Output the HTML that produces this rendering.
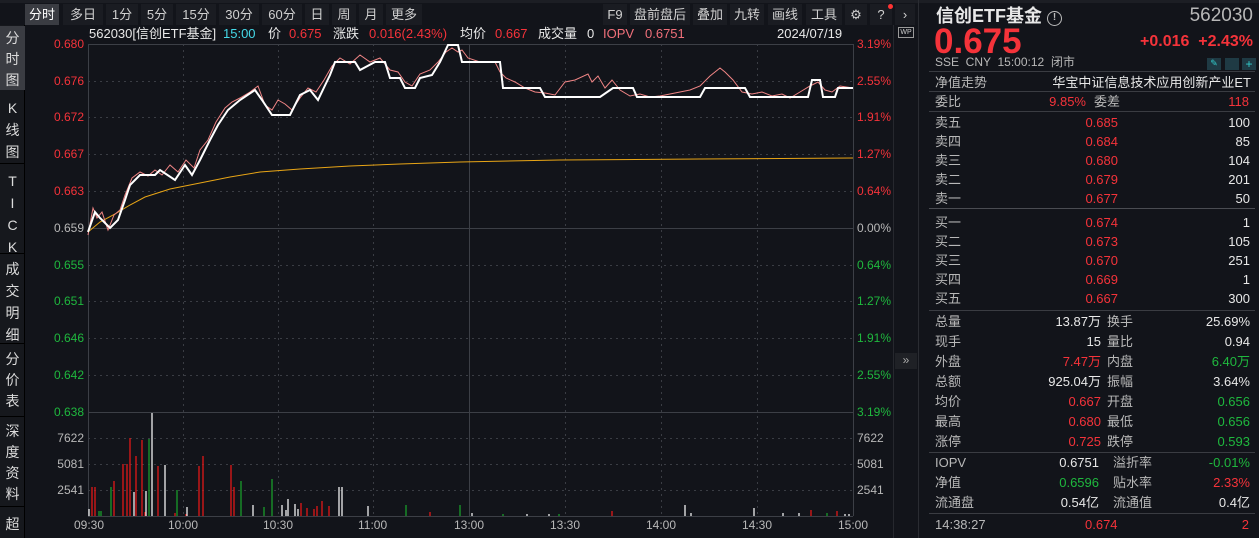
<!DOCTYPE html>
<html><head><meta charset="utf-8"><style>
*{margin:0;padding:0;box-sizing:border-box}
body{width:1259px;height:538px;background:#12141a;overflow:hidden;position:relative;font-family:"Liberation Sans","Noto Sans CJK SC",sans-serif;color:#d0d0d0;font-size:13px}
.a{position:absolute;white-space:nowrap}
.r{color:#f5333a}.g{color:#1fb83e}.w{color:#e8e8e8}.gy{color:#b8b8b8}.c{color:#45d9e8}
.tab{position:absolute;top:4px;height:21px;line-height:21px;font-size:13px;color:#d0d0d0;text-align:center;background:#1a1c22}
.lt{position:absolute;left:0;width:25px;text-align:center;font-size:14px;line-height:22px;color:#dcdcdc}
.rp{position:absolute;font-size:13px;line-height:19px}
.h{position:absolute;top:0}
</style></head><body>
<div class="a" style="left:0;top:0;width:1259px;height:3px;background:#1c1e24"></div>
<div class="tab" style="left:25px;width:34px;background:#3a3c42;color:#fff">分时</div>
<div class="tab" style="left:63px;width:40px">多日</div>
<div class="tab" style="left:106px;width:32px">1分</div>
<div class="tab" style="left:141px;width:32px">5分</div>
<div class="tab" style="left:176px;width:40px">15分</div>
<div class="tab" style="left:219px;width:40px">30分</div>
<div class="tab" style="left:262px;width:40px">60分</div>
<div class="tab" style="left:305px;width:24px">日</div>
<div class="tab" style="left:332px;width:24px">周</div>
<div class="tab" style="left:359px;width:24px">月</div>
<div class="tab" style="left:386px;width:36px">更多</div>
<div class="tab" style="left:603px;width:24px">F9</div>
<div class="tab" style="left:630px;width:60px">盘前盘后</div>
<div class="tab" style="left:693px;width:34px">叠加</div>
<div class="tab" style="left:730px;width:34px">九转</div>
<div class="tab" style="left:768px;width:34px">画线</div>
<div class="tab" style="left:806px;width:36px">工具</div>
<div class="tab" style="left:845px;width:22px">⚙</div>
<div class="tab" style="left:870px;width:22px">?</div>
<div class="a" style="left:888px;top:4px;width:5px;height:5px;border-radius:3px;background:#f33"></div>
<div class="tab" style="left:895px;width:20px">›</div>
<div class="a" style="left:0;top:25px;width:25px;height:513px;background:#16181d;border-right:1px solid #000"></div>
<div class="lt" style="top:26px;height:64px;background:#3a3c42;padding-top:2px;line-height:21px">分<br>时<br>图</div>
<div class="lt" style="top:97px;line-height:22px">K<br>线<br>图</div>
<div class="a" style="left:0;top:163px;width:25px;height:1px;background:#000"></div>
<div class="lt" style="top:170px;line-height:22px">T<br>I<br>C<br>K</div>
<div class="a" style="left:0;top:253px;width:25px;height:1px;background:#000"></div>
<div class="lt" style="top:258px;line-height:22px">成<br>交<br>明<br>细</div>
<div class="a" style="left:0;top:343px;width:25px;height:1px;background:#000"></div>
<div class="lt" style="top:349px;line-height:21px">分<br>价<br>表</div>
<div class="a" style="left:0;top:416px;width:25px;height:1px;background:#000"></div>
<div class="lt" style="top:421px;line-height:21px">深<br>度<br>资<br>料</div>
<div class="a" style="left:0;top:506px;width:25px;height:1px;background:#000"></div>
<div class="lt" style="top:513px">超</div>
<div class="a" style="left:0;top:25px;width:900px;height:18px;line-height:18px;font-size:13px">
<span class="h w" style="left:89px">562030[信创ETF基金]</span>
<span class="h c" style="left:223px">15:00</span>
<span class="h w" style="left:268px">价</span>
<span class="h r" style="left:289px">0.675</span>
<span class="h w" style="left:333px">涨跌</span>
<span class="h r" style="left:369px">0.016(2.43%)</span>
<span class="h w" style="left:460px">均价</span>
<span class="h r" style="left:495px">0.667</span>
<span class="h w" style="left:538px">成交量</span>
<span class="h w" style="left:587px">0</span>
<span class="h" style="left:603px;color:#f0707a">IOPV</span>
<span class="h" style="left:645px;color:#f0707a">0.6751</span>
<span class="h w" style="left:777px">2024/07/19</span>
</div>
<div class="a" style="left:28px;top:36px;width:56px;text-align:right;font-size:12px;line-height:16px">
<div class="r" style="position:absolute;right:0;top:0">0.680</div>
<div class="r" style="position:absolute;right:0;top:37px">0.676</div>
<div class="r" style="position:absolute;right:0;top:73px">0.672</div>
<div class="r" style="position:absolute;right:0;top:110px">0.667</div>
<div class="r" style="position:absolute;right:0;top:147px">0.663</div>
<div class="gy" style="position:absolute;right:0;top:184px">0.659</div>
<div class="g" style="position:absolute;right:0;top:221px">0.655</div>
<div class="g" style="position:absolute;right:0;top:257px">0.651</div>
<div class="g" style="position:absolute;right:0;top:294px">0.646</div>
<div class="g" style="position:absolute;right:0;top:331px">0.642</div>
<div class="g" style="position:absolute;right:0;top:368px">0.638</div>
<div class="gy" style="position:absolute;right:0;top:394px">7622</div>
<div class="gy" style="position:absolute;right:0;top:420px">5081</div>
<div class="gy" style="position:absolute;right:0;top:446px">2541</div>
</div>
<div class="a" style="left:857px;top:36px;font-size:12px;line-height:16px">
<div class="r" style="position:absolute;top:0">3.19%</div>
<div class="r" style="position:absolute;top:37px">2.55%</div>
<div class="r" style="position:absolute;top:73px">1.91%</div>
<div class="r" style="position:absolute;top:110px">1.27%</div>
<div class="r" style="position:absolute;top:147px">0.64%</div>
<div class="gy" style="position:absolute;top:184px">0.00%</div>
<div class="g" style="position:absolute;top:221px">0.64%</div>
<div class="g" style="position:absolute;top:257px">1.27%</div>
<div class="g" style="position:absolute;top:294px">1.91%</div>
<div class="g" style="position:absolute;top:331px">2.55%</div>
<div class="g" style="position:absolute;top:368px">3.19%</div>
<div class="gy" style="position:absolute;top:394px">7622</div>
<div class="gy" style="position:absolute;top:420px">5081</div>
<div class="gy" style="position:absolute;top:446px">2541</div>
</div>
<div class="a gy" style="left:0;top:517px;width:900px;height:16px;font-size:12px;line-height:16px">
<span style="position:absolute;left:74px">09:30</span><span style="position:absolute;left:168px">10:00</span><span style="position:absolute;left:263px">10:30</span><span style="position:absolute;left:358px">11:00</span><span style="position:absolute;left:454px">13:00</span><span style="position:absolute;left:550px">13:30</span><span style="position:absolute;left:646px">14:00</span><span style="position:absolute;left:742px">14:30</span><span style="position:absolute;left:838px">15:00</span></div>
<svg class="a" style="left:0;top:0" width="900" height="538">
<g stroke="#3a3d44" stroke-width="1" stroke-dasharray="2,4" fill="none">
<path d="M88 81.5H853M88 117.5H853M88 154.5H853M88 191.5H853M88 265.5H853M88 301.5H853M88 338.5H853M88 375.5H853M88 438.5H853M88 464.5H853M88 490.5H853"/>
<path d="M183.5 44V516M278.5 44V516M373.5 44V516M565.5 44V516M661.5 44V516M757.5 44V516"/>
</g>
<g stroke="#3c3f46" stroke-width="1" fill="none">
<path d="M88 44.5H853M88 228.5H853M88 412.5H853M88 516.5H853M469.5 44V516M88.5 44V516M853.5 44V516"/>
</g>
<polyline fill="none" stroke="#e8a516" stroke-width="1" points="88,232 100,222 115,214 130,205 145,197 170,189 200,183 230,177 260,172 300,169 350,166 400,164 460,162 560,160 700,159 853,158"/>
<polyline fill="none" stroke="#f08585" stroke-width="1" points="88,235 93,208 97,218 102,212 108,230 114,215 120,210 125,195 132,178 140,172 148,176 155,170 162,175 170,165 178,172 186,160 194,168 200,150 208,140 216,122 225,108 232,102 240,98 250,92 258,86 265,105 272,110 278,100 285,104 292,110 300,98 308,88 316,92 324,80 332,66 340,58 350,64 360,55 370,62 380,58 390,70 398,72 405,82 412,86 420,74 430,70 438,62 446,52 452,48 458,52 462,50 468,58 480,62 495,62 500,72 506,78 515,82 525,88 535,92 545,93 555,95 565,82 575,80 588,74 592,82 598,76 605,88 612,80 620,90 630,96 640,94 650,97 660,96 670,94 680,92 690,90 700,86 710,76 720,68 725,72 733,80 742,92 752,94 762,92 772,96 782,94 790,98 800,92 810,86 818,82 825,90 832,92 840,86 853,88"/>
<polyline fill="none" stroke="#ffffff" stroke-width="2" points="88,232 95,212 100,218 110,228 118,220 125,200 130,185 140,175 155,175 160,170 175,180 185,165 192,175 200,160 210,140 218,125 228,110 240,100 255,90 262,100 272,115 290,115 300,95 310,90 318,100 330,75 335,62 355,62 360,70 375,62 385,62 390,78 400,78 405,88 415,88 420,78 432,75 440,62 448,45 458,45 462,62 500,62 503,88 540,88 545,97 600,97 613,88 633,88 637,97 700,97 705,88 745,88 750,97 808,97 812,80 820,80 823,97 835,97 838,88 853,88"/>
<g stroke-width="1.3">
<path stroke="#e21818" d="M92 516V487M95 516V487M114 516V481M123 516V464M127 516V464M130 516V438M136 516V456M142 516V440M158 516V466M199 516V466M203 516V456M231 516V465M234 516V487M301 516V503M307 516V508M314 516V509M317 516V506M322 516V501M329 516V506M430 516V512M612 516V511M811 516V510M837 516V511M145 516V512M175 516V513M186 516V514"/>
<path stroke="#1a9c2a" d="M99 516V511M101 516V511M111 516V487M149 516V439M177 516V490M241 516V481M264 516V507M272 516V479M406 516V505M460 516V505M503 516V514M559 516V514M827 516V513"/>
<path stroke="#f0f0f0" d="M89 516V509M134 516V492M146 516V491M152 516V413M165 516V465M187 516V507M253 516V505M282 516V505M286 516V510M288 516V499M295 516V504M298 516V509M339 516V487M342 516V487M368 516V506M472 516V513M527 516V514M549 516V514M685 516V505M691 516V513M754 516V508M783 516V513M799 516V513M845 516V514M849 516V514"/>
</g>
</svg>
<div class="a" style="left:893px;top:25px;width:25px;height:513px;background:#12141a;border-left:1px solid #26282e"></div>
<div class="a" style="left:898px;top:27px;width:16px;height:11px;border:1px solid #9a9a9a;font-size:7px;line-height:9px;text-align:center;color:#ccc">WP</div>
<div class="a" style="left:895px;top:353px;width:22px;height:16px;font-size:12px;color:#aaa;text-align:center;background:#1f2126">»</div>
<div class="a" style="left:918px;top:0;width:1px;height:538px;background:#2a2c32"></div>
<div class="a w" style="left:936px;top:4px;font-size:18px;font-weight:bold;line-height:24px">信创ETF基金 <span style="display:inline-block;width:15px;height:15px;border:1.5px solid #bbb;border-radius:50%;font-size:10px;line-height:12px;text-align:center;vertical-align:2px;color:#bbb">!</span></div>
<div class="a gy" style="right:6px;top:4px;font-size:19px;line-height:24px">562030</div>
<div class="a r" style="left:934px;top:23px;font-size:35px;font-weight:bold;line-height:38px">0.675</div>
<div class="a r" style="right:6px;top:32px;font-size:16px;font-weight:bold;line-height:20px">+0.016 &nbsp;+2.43%</div>
<div class="a gy" style="left:935px;top:55px;font-size:12px;line-height:14px">SSE &nbsp;CNY &nbsp;15:00:12 &nbsp;闭市</div>
<div class="a" style="left:1207px;top:58px;width:14px;height:12px;background:#1f3a44;color:#3cc;font-size:9px;text-align:center">✎</div>
<div class="a" style="left:1225px;top:58px;width:14px;height:12px;background:#1f3a44"></div>
<div class="a" style="left:1242px;top:58px;width:14px;height:12px;background:#1f3a44;color:#3cc;font-size:12px;line-height:12px;text-align:center">+</div>
<div class="a" style="left:929px;top:71px;width:326px;height:1px;background:#3a3c42"></div>
<div class="rp gy" style="left:935px;top:73px">净值走势</div>
<div class="rp w" style="right:8px;top:73px">华宝中证信息技术应用创新产业ET</div>
<div class="a" style="left:929px;top:91px;width:326px;height:1px;background:#3a3c42"></div>
<div class="rp gy" style="left:935px;top:92px">委比</div><div class="rp r" style="left:1020px;top:92px;width:66px;text-align:right">9.85%</div><div class="rp gy" style="left:1094px;top:92px">委差</div><div class="rp r" style="right:10px;top:92px">118</div>
<div class="a" style="left:929px;top:111px;width:326px;height:1px;background:#3a3c42"></div>
<div style="position:absolute;left:935px;top:113px;width:315px;line-height:19px;font-size:13px">
<div style="display:flex"><span class="gy" style="width:80px">卖五</span><span class="r" style="width:103px;text-align:right">0.685</span><span class="w" style="flex:1;text-align:right">100</span></div>
<div style="display:flex"><span class="gy" style="width:80px">卖四</span><span class="r" style="width:103px;text-align:right">0.684</span><span class="w" style="flex:1;text-align:right">85</span></div>
<div style="display:flex"><span class="gy" style="width:80px">卖三</span><span class="r" style="width:103px;text-align:right">0.680</span><span class="w" style="flex:1;text-align:right">104</span></div>
<div style="display:flex"><span class="gy" style="width:80px">卖二</span><span class="r" style="width:103px;text-align:right">0.679</span><span class="w" style="flex:1;text-align:right">201</span></div>
<div style="display:flex"><span class="gy" style="width:80px">卖一</span><span class="r" style="width:103px;text-align:right">0.677</span><span class="w" style="flex:1;text-align:right">50</span></div>
<div style="height:5px"></div>
<div style="display:flex"><span class="gy" style="width:80px">买一</span><span class="r" style="width:103px;text-align:right">0.674</span><span class="w" style="flex:1;text-align:right">1</span></div>
<div style="display:flex"><span class="gy" style="width:80px">买二</span><span class="r" style="width:103px;text-align:right">0.673</span><span class="w" style="flex:1;text-align:right">105</span></div>
<div style="display:flex"><span class="gy" style="width:80px">买三</span><span class="r" style="width:103px;text-align:right">0.670</span><span class="w" style="flex:1;text-align:right">251</span></div>
<div style="display:flex"><span class="gy" style="width:80px">买四</span><span class="r" style="width:103px;text-align:right">0.669</span><span class="w" style="flex:1;text-align:right">1</span></div>
<div style="display:flex"><span class="gy" style="width:80px">买五</span><span class="r" style="width:103px;text-align:right">0.667</span><span class="w" style="flex:1;text-align:right">300</span></div>
</div>
<div class="a" style="left:929px;top:208px;width:326px;height:1px;background:#4a4c52"></div>
<div class="a" style="left:929px;top:310px;width:326px;height:1px;background:#3a3c42"></div>
<div style="position:absolute;left:935px;top:312px;width:315px;line-height:20px;font-size:13px">
<div style="display:flex"><span class="gy" style="width:40px">总量</span><span class="w" style="width:126px;text-align:right">13.87万</span><span class="gy" style="width:40px;margin-left:6px">换手</span><span class="w" style="flex:1;text-align:right">25.69%</span></div>
<div style="display:flex"><span class="gy" style="width:40px">现手</span><span class="w" style="width:126px;text-align:right">15</span><span class="gy" style="width:40px;margin-left:6px">量比</span><span class="w" style="flex:1;text-align:right">0.94</span></div>
<div style="display:flex"><span class="gy" style="width:40px">外盘</span><span class="r" style="width:126px;text-align:right">7.47万</span><span class="gy" style="width:40px;margin-left:6px">内盘</span><span class="g" style="flex:1;text-align:right">6.40万</span></div>
<div style="display:flex"><span class="gy" style="width:40px">总额</span><span class="w" style="width:126px;text-align:right">925.04万</span><span class="gy" style="width:40px;margin-left:6px">振幅</span><span class="w" style="flex:1;text-align:right">3.64%</span></div>
<div style="display:flex"><span class="gy" style="width:40px">均价</span><span class="r" style="width:126px;text-align:right">0.667</span><span class="gy" style="width:40px;margin-left:6px">开盘</span><span class="g" style="flex:1;text-align:right">0.656</span></div>
<div style="display:flex"><span class="gy" style="width:40px">最高</span><span class="r" style="width:126px;text-align:right">0.680</span><span class="gy" style="width:40px;margin-left:6px">最低</span><span class="g" style="flex:1;text-align:right">0.656</span></div>
<div style="display:flex"><span class="gy" style="width:40px">涨停</span><span class="r" style="width:126px;text-align:right">0.725</span><span class="gy" style="width:40px;margin-left:6px">跌停</span><span class="g" style="flex:1;text-align:right">0.593</span></div>
</div>
<div class="a" style="left:929px;top:452px;width:326px;height:1px;background:#3a3c42"></div>
<div style="position:absolute;left:935px;top:453px;width:315px;line-height:20px;font-size:13px">
<div style="display:flex"><span class="gy" style="width:60px">IOPV</span><span class="w" style="width:104px;text-align:right">0.6751</span><span class="gy" style="width:60px;margin-left:14px">溢折率</span><span class="g" style="flex:1;text-align:right">-0.01%</span></div>
<div style="display:flex"><span class="gy" style="width:60px">净值</span><span class="g" style="width:104px;text-align:right">0.6596</span><span class="gy" style="width:60px;margin-left:14px">贴水率</span><span class="r" style="flex:1;text-align:right">2.33%</span></div>
<div style="display:flex"><span class="gy" style="width:60px">流通盘</span><span class="w" style="width:104px;text-align:right">0.54亿</span><span class="gy" style="width:60px;margin-left:14px">流通值</span><span class="w" style="flex:1;text-align:right">0.4亿</span></div>
</div>
<div class="a" style="left:929px;top:513px;width:326px;height:1px;background:#3a3c42"></div>
<div class="a gy" style="left:935px;top:516px;line-height:18px">14:38:27</div>
<div class="a r" style="left:1085px;top:516px;line-height:18px">0.674</div>
<div class="a r" style="right:10px;top:516px;line-height:18px">2</div>
</body></html>
